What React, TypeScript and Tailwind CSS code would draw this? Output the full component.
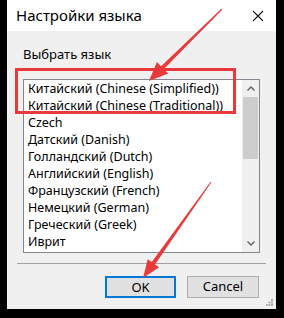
import React from "react";

const languages = [
  "Китайский (Chinese (Simplified))",
  "Китайский (Chinese (Traditional))",
  "Czech",
  "Датский (Danish)",
  "Голландский (Dutch)",
  "Английский (English)",
  "Французский (French)",
  "Немецкий (German)",
  "Греческий (Greek)",
  "Иврит",
];

const App = () => {
  return (
    <main
      className="relative w-[284px] h-[318px] bg-black pl-[7px] pr-[8px] pb-[9px] select-none"
      style={{ fontFamily: '"Noto Sans", "Open Sans", sans-serif' }}
    >
      <div className="h-full flex flex-col bg-[#f0f0f0]">
        {/* title bar */}
        <div className="h-[31px] bg-white flex items-center justify-between pl-[9px] pr-[12px]">
          <p className="text-[15px] text-black">Настройки языка</p>
          <svg width="12" height="12" viewBox="0 0 12 12">
            <path d="M1 1L11 11M11 1L1 11" stroke="#111" strokeWidth="1.1" />
          </svg>
        </div>

        <div className="flex-1 flex flex-col px-[16px] pt-[13px]">
          <p className="text-[13px] text-black leading-[20px]">Выбрать язык</p>

          {/* list box */}
          <div className="mt-[15px] h-[174px] w-[237px] border border-[#828790] bg-white flex">
            <ul className="flex-1 pl-[4px] pt-[1px]">
              {languages.map((lang) => (
                <li key={lang} className="h-[17px] text-[12.5px] leading-[15px] text-black whitespace-nowrap">
                  {lang}
                </li>
              ))}
            </ul>
            <div className="w-[17px] flex flex-col bg-[#f0f0f0]">
              <div className="h-[17px] flex items-center justify-center">
                <svg width="8" height="5" viewBox="0 0 8 5">
                  <path d="M0.5 4.5L4 1L7.5 4.5" stroke="#606060" strokeWidth="1.4" fill="none" />
                </svg>
              </div>
              <div className="h-[62px] mx-[1px] bg-[#cdcdcd]" />
              <div className="flex-1" />
              <div className="h-[17px] flex items-center justify-center">
                <svg width="8" height="5" viewBox="0 0 8 5">
                  <path d="M0.5 0.5L4 4L7.5 0.5" stroke="#606060" strokeWidth="1.4" fill="none" />
                </svg>
              </div>
            </div>
          </div>

          <div className="mt-[10px] -mx-[6px] h-px bg-[#a0a0a0]" />

          <div className="mt-[12px] flex justify-end gap-[11px] pr-[1px]">
            <button className="w-[71px] h-[22px] bg-[#e1e1e1] border-2 border-[#0078d7] text-[13px] text-black">
              OK
            </button>
            <button className="w-[72px] h-[22px] bg-[#e1e1e1] border border-[#adadad] text-[13px] text-black">
              Cancel
            </button>
          </div>
        </div>

        {/* resize grip */}
        <div className="flex justify-end pr-[3px] pb-[3px]">
          <svg width="7" height="7" viewBox="0 0 7 7">
            <rect x="5" y="0" width="2" height="2" fill="#b0b0b0" />
            <rect x="2.5" y="2.5" width="2" height="2" fill="#b0b0b0" />
            <rect x="5" y="2.5" width="2" height="2" fill="#b0b0b0" />
            <rect x="0" y="5" width="2" height="2" fill="#b0b0b0" />
            <rect x="2.5" y="5" width="2" height="2" fill="#b0b0b0" />
            <rect x="5" y="5" width="2" height="2" fill="#b0b0b0" />
          </svg>
        </div>
      </div>

      {/* highlight box */}
      <div className="absolute left-[15px] top-[68px] w-[221px] h-[46px] border-[3px] border-[#e8393b]" />

      {/* annotation arrows */}
      <svg className="absolute left-0 top-0 pointer-events-none" width="284" height="318" viewBox="0 0 284 318">
        <path
          d="M222.4 9.4 L163.9 69.1 L168.1 73.4 L149 81 L156.9 62 L161.1 66.3 L221.6 8.6 Z"
          fill="#e8393b"
        />
        <path
          d="M211.4 182.3 L155 264.5 L159.1 267.3 L143 278 L147.7 259.3 L151.8 262.1 L210.6 181.7 Z"
          fill="#e8393b"
        />
      </svg>
    </main>
  );
};

export default App;
